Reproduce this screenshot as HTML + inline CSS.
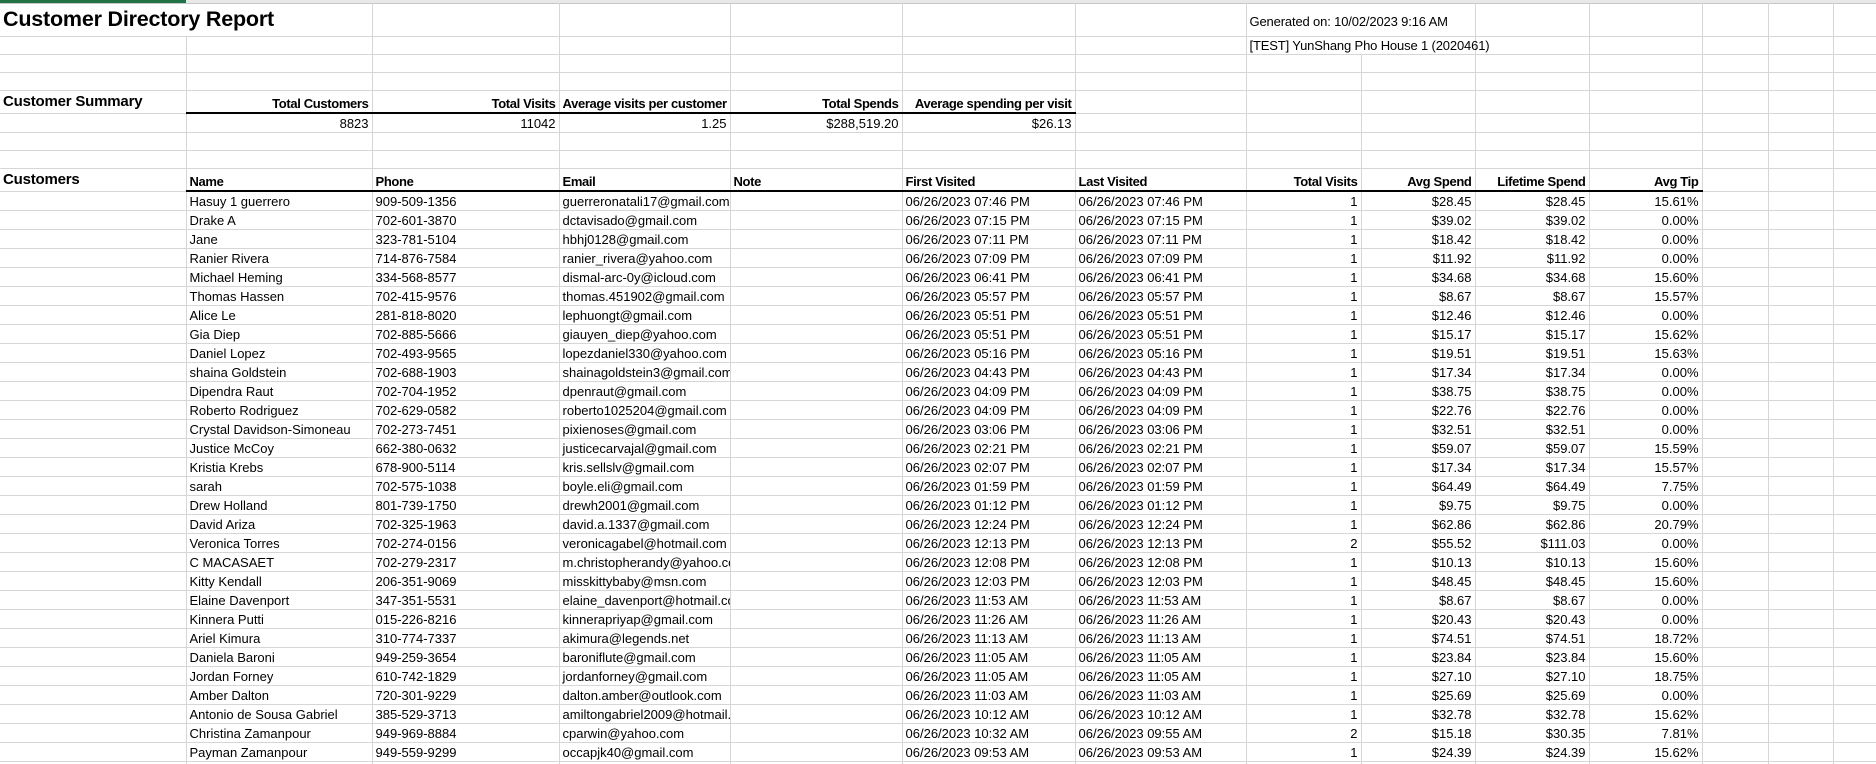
<!DOCTYPE html>
<html><head><meta charset="utf-8"><style>
html,body{margin:0;padding:0;background:#fff;width:1876px;height:764px;overflow:hidden}
body{font-family:"Liberation Sans",Arial,sans-serif;font-size:13px;color:#000;position:relative}
.top{position:absolute;left:0;top:0;width:1876px;height:3px;background:#e8e8e8;border-bottom:1px solid #c8c8c8}
.top i{position:absolute;left:0;top:0;width:186px;height:3px;background:#217346}
table{position:absolute;left:0;top:3px;border-collapse:collapse;table-layout:fixed;width:1876px}
td{border-right:1px solid #d6d6d6;border-bottom:1px solid #d6d6d6;padding:0 3px 1px 3px;white-space:nowrap;overflow:hidden;vertical-align:bottom;height:18px;line-height:15px;box-sizing:border-box}
tr.r19 td{height:19px}
td.r{text-align:right}
td.b{font-weight:bold;letter-spacing:-0.35px}
td.u{border-bottom:2px solid #000}
td.v{overflow:visible;letter-spacing:-0.15px}
.title{font-size:21.5px;font-weight:bold;letter-spacing:-0.2px;line-height:24px;vertical-align:middle}
.sec{font-size:15px;font-weight:bold;letter-spacing:-0.2px}
</style></head><body>
<div class="top"><i></i></div>
<table>
<colgroup><col style="width:186px"><col style="width:186px"><col style="width:187px"><col style="width:171px"><col style="width:172px"><col style="width:173px"><col style="width:171px"><col style="width:115px"><col style="width:114px"><col style="width:114px"><col style="width:113px"><col style="width:66px"><col style="width:65px"><col style="width:43px"></colgroup>
<tr style="height:33px"><td colspan="2" class="title" style="height:33px;overflow:visible">Customer Directory Report</td><td></td><td></td><td></td><td></td><td></td><td colspan="2" class="v" style="vertical-align:middle;padding-top:6px">Generated on: 10/02/2023 9:16 AM</td><td></td><td></td><td></td><td></td><td></td></tr>
<tr><td></td><td></td><td></td><td></td><td></td><td></td><td></td><td colspan="2" class="v">[TEST] YunShang Pho House 1 (2020461)</td><td></td><td></td><td></td><td></td><td></td></tr>
<tr><td></td><td></td><td></td><td></td><td></td><td></td><td></td><td></td><td></td><td></td><td></td><td></td><td></td><td></td></tr>
<tr><td></td><td></td><td></td><td></td><td></td><td></td><td></td><td></td><td></td><td></td><td></td><td></td><td></td><td></td></tr>
<tr><td class="sec" style="height:23px;padding-bottom:4px">Customer Summary</td><td class="b r u" style="height:23px">Total Customers</td><td class="b r u">Total Visits</td><td class="b r u">Average visits per customer</td><td class="b r u">Total Spends</td><td class="b r u">Average spending per visit</td><td></td><td></td><td></td><td></td><td></td><td></td><td></td><td></td></tr>
<tr class="r19"><td></td><td class="r">8823</td><td class="r">11042</td><td class="r">1.25</td><td class="r">$288,519.20</td><td class="r">$26.13</td><td></td><td></td><td></td><td></td><td></td><td></td><td></td><td></td></tr>
<tr><td></td><td></td><td></td><td></td><td></td><td></td><td></td><td></td><td></td><td></td><td></td><td></td><td></td><td></td></tr>
<tr><td></td><td></td><td></td><td></td><td></td><td></td><td></td><td></td><td></td><td></td><td></td><td></td><td></td><td></td></tr>
<tr><td class="sec" style="height:23px;padding-bottom:4px">Customers</td><td class="b u" style="height:23px">Name</td><td class="b u">Phone</td><td class="b u">Email</td><td class="b u">Note</td><td class="b u">First Visited</td><td class="b u">Last Visited</td><td class="b r u">Total Visits</td><td class="b r u">Avg Spend</td><td class="b r u">Lifetime Spend</td><td class="b r u">Avg Tip</td><td></td><td></td><td></td></tr>
<tr class="r19"><td></td><td>Hasuy 1 guerrero</td><td>909-509-1356</td><td>guerreronatali17@gmail.com</td><td></td><td>06/26/2023 07:46 PM</td><td>06/26/2023 07:46 PM</td><td class="r">1</td><td class="r">$28.45</td><td class="r">$28.45</td><td class="r">15.61%</td><td></td><td></td><td></td></tr>
<tr class="r19"><td></td><td>Drake A</td><td>702-601-3870</td><td>dctavisado@gmail.com</td><td></td><td>06/26/2023 07:15 PM</td><td>06/26/2023 07:15 PM</td><td class="r">1</td><td class="r">$39.02</td><td class="r">$39.02</td><td class="r">0.00%</td><td></td><td></td><td></td></tr>
<tr class="r19"><td></td><td>Jane</td><td>323-781-5104</td><td>hbhj0128@gmail.com</td><td></td><td>06/26/2023 07:11 PM</td><td>06/26/2023 07:11 PM</td><td class="r">1</td><td class="r">$18.42</td><td class="r">$18.42</td><td class="r">0.00%</td><td></td><td></td><td></td></tr>
<tr class="r19"><td></td><td>Ranier Rivera</td><td>714-876-7584</td><td>ranier_rivera@yahoo.com</td><td></td><td>06/26/2023 07:09 PM</td><td>06/26/2023 07:09 PM</td><td class="r">1</td><td class="r">$11.92</td><td class="r">$11.92</td><td class="r">0.00%</td><td></td><td></td><td></td></tr>
<tr class="r19"><td></td><td>Michael Heming</td><td>334-568-8577</td><td>dismal-arc-0y@icloud.com</td><td></td><td>06/26/2023 06:41 PM</td><td>06/26/2023 06:41 PM</td><td class="r">1</td><td class="r">$34.68</td><td class="r">$34.68</td><td class="r">15.60%</td><td></td><td></td><td></td></tr>
<tr class="r19"><td></td><td>Thomas Hassen</td><td>702-415-9576</td><td>thomas.451902@gmail.com</td><td></td><td>06/26/2023 05:57 PM</td><td>06/26/2023 05:57 PM</td><td class="r">1</td><td class="r">$8.67</td><td class="r">$8.67</td><td class="r">15.57%</td><td></td><td></td><td></td></tr>
<tr class="r19"><td></td><td>Alice Le</td><td>281-818-8020</td><td>lephuongt@gmail.com</td><td></td><td>06/26/2023 05:51 PM</td><td>06/26/2023 05:51 PM</td><td class="r">1</td><td class="r">$12.46</td><td class="r">$12.46</td><td class="r">0.00%</td><td></td><td></td><td></td></tr>
<tr class="r19"><td></td><td>Gia Diep</td><td>702-885-5666</td><td>giauyen_diep@yahoo.com</td><td></td><td>06/26/2023 05:51 PM</td><td>06/26/2023 05:51 PM</td><td class="r">1</td><td class="r">$15.17</td><td class="r">$15.17</td><td class="r">15.62%</td><td></td><td></td><td></td></tr>
<tr class="r19"><td></td><td>Daniel Lopez</td><td>702-493-9565</td><td>lopezdaniel330@yahoo.com</td><td></td><td>06/26/2023 05:16 PM</td><td>06/26/2023 05:16 PM</td><td class="r">1</td><td class="r">$19.51</td><td class="r">$19.51</td><td class="r">15.63%</td><td></td><td></td><td></td></tr>
<tr class="r19"><td></td><td>shaina Goldstein</td><td>702-688-1903</td><td>shainagoldstein3@gmail.com</td><td></td><td>06/26/2023 04:43 PM</td><td>06/26/2023 04:43 PM</td><td class="r">1</td><td class="r">$17.34</td><td class="r">$17.34</td><td class="r">0.00%</td><td></td><td></td><td></td></tr>
<tr class="r19"><td></td><td>Dipendra Raut</td><td>702-704-1952</td><td>dpenraut@gmail.com</td><td></td><td>06/26/2023 04:09 PM</td><td>06/26/2023 04:09 PM</td><td class="r">1</td><td class="r">$38.75</td><td class="r">$38.75</td><td class="r">0.00%</td><td></td><td></td><td></td></tr>
<tr class="r19"><td></td><td>Roberto Rodriguez</td><td>702-629-0582</td><td>roberto1025204@gmail.com</td><td></td><td>06/26/2023 04:09 PM</td><td>06/26/2023 04:09 PM</td><td class="r">1</td><td class="r">$22.76</td><td class="r">$22.76</td><td class="r">0.00%</td><td></td><td></td><td></td></tr>
<tr class="r19"><td></td><td>Crystal Davidson-Simoneau</td><td>702-273-7451</td><td>pixienoses@gmail.com</td><td></td><td>06/26/2023 03:06 PM</td><td>06/26/2023 03:06 PM</td><td class="r">1</td><td class="r">$32.51</td><td class="r">$32.51</td><td class="r">0.00%</td><td></td><td></td><td></td></tr>
<tr class="r19"><td></td><td>Justice McCoy</td><td>662-380-0632</td><td>justicecarvajal@gmail.com</td><td></td><td>06/26/2023 02:21 PM</td><td>06/26/2023 02:21 PM</td><td class="r">1</td><td class="r">$59.07</td><td class="r">$59.07</td><td class="r">15.59%</td><td></td><td></td><td></td></tr>
<tr class="r19"><td></td><td>Kristia Krebs</td><td>678-900-5114</td><td>kris.sellslv@gmail.com</td><td></td><td>06/26/2023 02:07 PM</td><td>06/26/2023 02:07 PM</td><td class="r">1</td><td class="r">$17.34</td><td class="r">$17.34</td><td class="r">15.57%</td><td></td><td></td><td></td></tr>
<tr class="r19"><td></td><td>sarah</td><td>702-575-1038</td><td>boyle.eli@gmail.com</td><td></td><td>06/26/2023 01:59 PM</td><td>06/26/2023 01:59 PM</td><td class="r">1</td><td class="r">$64.49</td><td class="r">$64.49</td><td class="r">7.75%</td><td></td><td></td><td></td></tr>
<tr class="r19"><td></td><td>Drew Holland</td><td>801-739-1750</td><td>drewh2001@gmail.com</td><td></td><td>06/26/2023 01:12 PM</td><td>06/26/2023 01:12 PM</td><td class="r">1</td><td class="r">$9.75</td><td class="r">$9.75</td><td class="r">0.00%</td><td></td><td></td><td></td></tr>
<tr class="r19"><td></td><td>David Ariza</td><td>702-325-1963</td><td>david.a.1337@gmail.com</td><td></td><td>06/26/2023 12:24 PM</td><td>06/26/2023 12:24 PM</td><td class="r">1</td><td class="r">$62.86</td><td class="r">$62.86</td><td class="r">20.79%</td><td></td><td></td><td></td></tr>
<tr class="r19"><td></td><td>Veronica Torres</td><td>702-274-0156</td><td>veronicagabel@hotmail.com</td><td></td><td>06/26/2023 12:13 PM</td><td>06/26/2023 12:13 PM</td><td class="r">2</td><td class="r">$55.52</td><td class="r">$111.03</td><td class="r">0.00%</td><td></td><td></td><td></td></tr>
<tr class="r19"><td></td><td>C MACASAET</td><td>702-279-2317</td><td>m.christopherandy@yahoo.com</td><td></td><td>06/26/2023 12:08 PM</td><td>06/26/2023 12:08 PM</td><td class="r">1</td><td class="r">$10.13</td><td class="r">$10.13</td><td class="r">15.60%</td><td></td><td></td><td></td></tr>
<tr class="r19"><td></td><td>Kitty Kendall</td><td>206-351-9069</td><td>misskittybaby@msn.com</td><td></td><td>06/26/2023 12:03 PM</td><td>06/26/2023 12:03 PM</td><td class="r">1</td><td class="r">$48.45</td><td class="r">$48.45</td><td class="r">15.60%</td><td></td><td></td><td></td></tr>
<tr class="r19"><td></td><td>Elaine Davenport</td><td>347-351-5531</td><td>elaine_davenport@hotmail.com</td><td></td><td>06/26/2023 11:53 AM</td><td>06/26/2023 11:53 AM</td><td class="r">1</td><td class="r">$8.67</td><td class="r">$8.67</td><td class="r">0.00%</td><td></td><td></td><td></td></tr>
<tr class="r19"><td></td><td>Kinnera Putti</td><td>015-226-8216</td><td>kinnerapriyap@gmail.com</td><td></td><td>06/26/2023 11:26 AM</td><td>06/26/2023 11:26 AM</td><td class="r">1</td><td class="r">$20.43</td><td class="r">$20.43</td><td class="r">0.00%</td><td></td><td></td><td></td></tr>
<tr class="r19"><td></td><td>Ariel Kimura</td><td>310-774-7337</td><td>akimura@legends.net</td><td></td><td>06/26/2023 11:13 AM</td><td>06/26/2023 11:13 AM</td><td class="r">1</td><td class="r">$74.51</td><td class="r">$74.51</td><td class="r">18.72%</td><td></td><td></td><td></td></tr>
<tr class="r19"><td></td><td>Daniela Baroni</td><td>949-259-3654</td><td>baroniflute@gmail.com</td><td></td><td>06/26/2023 11:05 AM</td><td>06/26/2023 11:05 AM</td><td class="r">1</td><td class="r">$23.84</td><td class="r">$23.84</td><td class="r">15.60%</td><td></td><td></td><td></td></tr>
<tr class="r19"><td></td><td>Jordan Forney</td><td>610-742-1829</td><td>jordanforney@gmail.com</td><td></td><td>06/26/2023 11:05 AM</td><td>06/26/2023 11:05 AM</td><td class="r">1</td><td class="r">$27.10</td><td class="r">$27.10</td><td class="r">18.75%</td><td></td><td></td><td></td></tr>
<tr class="r19"><td></td><td>Amber Dalton</td><td>720-301-9229</td><td>dalton.amber@outlook.com</td><td></td><td>06/26/2023 11:03 AM</td><td>06/26/2023 11:03 AM</td><td class="r">1</td><td class="r">$25.69</td><td class="r">$25.69</td><td class="r">0.00%</td><td></td><td></td><td></td></tr>
<tr class="r19"><td></td><td>Antonio de Sousa Gabriel</td><td>385-529-3713</td><td>amiltongabriel2009@hotmail.com</td><td></td><td>06/26/2023 10:12 AM</td><td>06/26/2023 10:12 AM</td><td class="r">1</td><td class="r">$32.78</td><td class="r">$32.78</td><td class="r">15.62%</td><td></td><td></td><td></td></tr>
<tr class="r19"><td></td><td>Christina Zamanpour</td><td>949-969-8884</td><td>cparwin@yahoo.com</td><td></td><td>06/26/2023 10:32 AM</td><td>06/26/2023 09:55 AM</td><td class="r">2</td><td class="r">$15.18</td><td class="r">$30.35</td><td class="r">7.81%</td><td></td><td></td><td></td></tr>
<tr class="r19"><td></td><td>Payman Zamanpour</td><td>949-559-9299</td><td>occapjk40@gmail.com</td><td></td><td>06/26/2023 09:53 AM</td><td>06/26/2023 09:53 AM</td><td class="r">1</td><td class="r">$24.39</td><td class="r">$24.39</td><td class="r">15.62%</td><td></td><td></td><td></td></tr>
<tr class="r19"><td></td><td></td><td></td><td></td><td></td><td></td><td></td><td></td><td></td><td></td><td></td><td></td><td></td><td></td></tr>
</table>
</body></html>
